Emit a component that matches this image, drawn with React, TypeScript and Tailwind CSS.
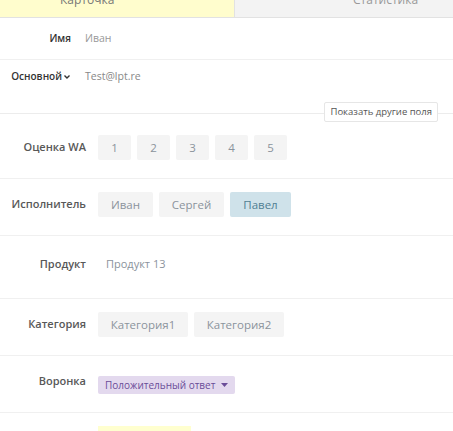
const font = { fontFamily: '"Open Sans", "Noto Sans", sans-serif' };

function Chip({ children, active = false }: { children: React.ReactNode; active?: boolean }) {
  return (
    <span
      className={[
        "h-[25px] flex items-center justify-center rounded-[2px] text-[11.5px]",
        active ? "bg-[#cfe2ea] text-[#4f7f93]" : "bg-[#f4f4f4] text-[#8b939c]",
      ].join(" ")}
    >
      {children}
    </span>
  );
}

function Row({ label, children, h = "h-[25px]", align = "items-center" }: { label: string; children: React.ReactNode; h?: string; align?: string }) {
  return (
    <div className="flex items-center pt-[13px] pb-[18px] border-b border-[#f0f0f0]">
      <div className="w-[86px] text-right text-[11px] font-semibold text-[#585858]">{label}</div>
      <div className={`ml-[12px] flex gap-[6px] ${h} ${align}`}>{children}</div>
    </div>
  );
}

export default function App() {
  return (
    <div className="w-[453px] h-[431px] overflow-hidden bg-white" style={font}>
      <div className="flex h-[36px] -mt-[18px] border-b border-[#e2e2e2] text-[12px]">
        <div className="w-[235px] bg-[#fffdcd] border-r border-[#e2e2e2] flex items-center pl-[60px] text-[#777]">Карточка</div>
        <div className="flex-1 bg-[#f3f3f3] flex items-center pl-[118px] text-[#999]">Статистика</div>
      </div>

      <div className="flex items-center h-[42px] border-b border-[#f0f0f0]">
        <div className="w-[71px] text-right text-[10px] font-semibold text-[#333]">Имя</div>
        <div className="ml-[14px] text-[10.5px] text-[#999]">Иван</div>
      </div>
      <div className="flex items-start h-[42px] pt-[9px]">
        <div className="w-[71px] flex justify-end items-center text-[10px] font-semibold text-[#333]">
          Основной
          <svg width="8" height="8" viewBox="0 0 8 8" className="ml-[1px]">
            <path d="M1.5 2.5 L4 5 L6.5 2.5" stroke="#333" strokeWidth="1.4" fill="none" />
          </svg>
        </div>
        <div className="ml-[14px] text-[10.5px] text-[#888]">Test@lpt.re</div>
      </div>
      <div className="flex items-end h-[20px]">
        <div className="flex-1 h-px mb-[8px] bg-[#ececec]" />
        <button className="h-[20px] px-[5px] border border-[#e6e6e6] rounded-[2px] bg-white text-[9.5px] text-[#555]">
          Показать другие поля
        </button>
        <div className="w-[15px] h-px mb-[8px] bg-[#ececec]" />
      </div>

      <Row label="Оценка WA">
        {["1", "2", "3", "4", "5"].map((n) => (
          <span key={n} className="w-[33px]"><Chip>{n}</Chip></span>
        ))}
      </Row>
      <Row label="Исполнитель">
        <span className="w-[55px]"><Chip>Иван</Chip></span>
        <span className="w-[65px]"><Chip>Сергей</Chip></span>
        <span className="w-[61px]"><Chip active>Павел</Chip></span>
      </Row>
      <Row label="Продукт" h="h-[31px]">
        <span className="text-[11px] text-[#8b939c] pl-[8px]">Продукт 13</span>
      </Row>
      <Row label="Категория">
        <span className="w-[90px]"><Chip>Категория1</Chip></span>
        <span className="w-[90px]"><Chip>Категория2</Chip></span>
      </Row>
      <Row label="Воронка" align="items-end">
        <span className="h-[18px] px-[7px] flex items-center gap-[6px] rounded-[2px] bg-[#e3d9ee] text-[10px] text-[#6a4c98]">
          Положительный ответ
          <svg width="7" height="4" viewBox="0 0 7 4"><path d="M0 0 H7 L3.5 4 Z" fill="#6a4c98" /></svg>
        </span>
      </Row>
      <div className="pt-[13px] pl-[98px]">
        <div className="w-[93px] h-[25px] bg-[#ffffcf]" />
      </div>
    </div>
  );
}
